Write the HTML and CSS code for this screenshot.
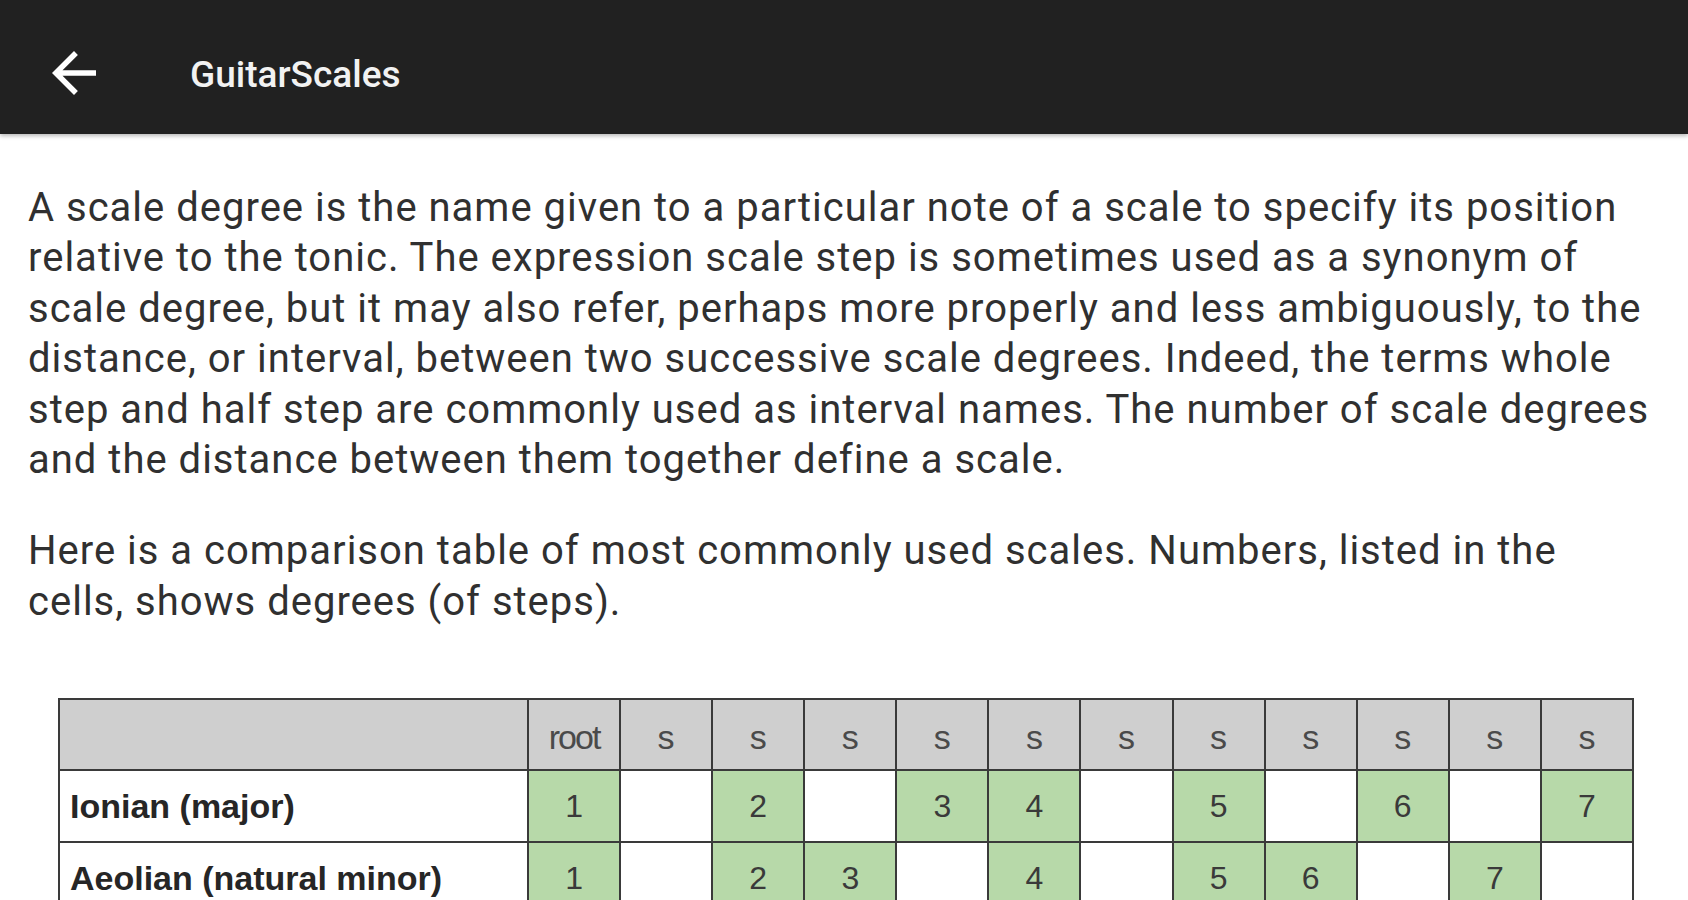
FILE: index.html
```html
<!DOCTYPE html>
<html>
<head>
<meta charset="utf-8">
<title>GuitarScales</title>
<link rel="stylesheet" href="styles.css">
</head>
<body>
<header class="appbar">
  <svg class="back" viewBox="0 0 24 24" width="66" height="66" aria-hidden="true">
    <path d="M20 11H7.83l5.59-5.59L12 4l-8 8 8 8 1.41-1.41L7.83 13H20v-2z" fill="#ffffff"/>
  </svg>
  <span class="title">GuitarScales</span>
</header>
<main class="content">
  <p class="para">A scale degree is the name given to a particular note of a scale to specify its position relative to the tonic. The expression scale step is sometimes used as a synonym of scale degree, but it may also refer, perhaps more properly and less ambiguously, to the distance, or interval, between two successive scale degrees. Indeed, the terms whole step and half step are commonly used as interval names. The number of scale degrees and the distance between them together define a scale.</p>
  <p class="para">Here is a comparison table of most commonly used scales. Numbers, listed in the cells, shows degrees (of steps).</p>
  <table class="scales">
    <colgroup>
      <col class="c-name">
      <col class="c-step"><col class="c-step"><col class="c-step"><col class="c-step">
      <col class="c-step"><col class="c-step"><col class="c-step"><col class="c-step">
      <col class="c-step"><col class="c-step"><col class="c-step"><col class="c-step">
    </colgroup>
    <thead>
      <tr>
        <th class="hname"></th>
        <th class="root">root</th>
        <th>s</th><th>s</th><th>s</th><th>s</th><th>s</th>
        <th>s</th><th>s</th><th>s</th><th>s</th><th>s</th><th>s</th>
      </tr>
    </thead>
    <tbody>
      <tr>
        <td class="name">Ionian (major)</td>
        <td class="on">1</td><td></td><td class="on">2</td><td></td><td class="on">3</td><td class="on">4</td>
        <td></td><td class="on">5</td><td></td><td class="on">6</td><td></td><td class="on">7</td>
      </tr>
      <tr>
        <td class="name">Aeolian (natural minor)</td>
        <td class="on">1</td><td></td><td class="on">2</td><td class="on">3</td><td></td><td class="on">4</td>
        <td></td><td class="on">5</td><td class="on">6</td><td></td><td class="on">7</td><td></td>
      </tr>
    </tbody>
  </table>
</main>
</body>
</html>
```

FILE: styles.css
```css
html, body {
  margin: 0;
  padding: 0;
  background: #ffffff;
}
body {
  width: 1688px;
  height: 900px;
  overflow: hidden;
  font-family: Roboto, "Noto Sans", sans-serif;
}
.appbar {
  position: relative;
  z-index: 2;
  height: 134px;
  background: #212121;
  display: flex;
  align-items: center;
  padding-left: 41px;
  box-shadow: 0 2px 4px rgba(0, 0, 0, 0.28);
}
.back {
  display: block;
  margin-top: 12px;
}
.title {
  margin-left: 83px;
  color: #f2f2f2;
  font-family: Roboto, sans-serif;
  font-weight: 500;
  font-size: 37px;
  margin-top: 14px;
}
.content {
  padding: 49px 26px 0 28px;
}
.para {
  margin: 0 0 41px 0;
  font-size: 40px;
  letter-spacing: 1px;
  line-height: 50.4px;
  color: #303030;
}
.scales {
  margin: 71px 0 0 30px;
  width: 1576px;
  table-layout: fixed;
  border-collapse: collapse;
  font-family: "Liberation Sans", Arial, sans-serif;
}
.c-name { width: 469px; }
.scales th, .scales td {
  border: 2px solid #3a3a3a;
  padding: 0;
  text-align: center;
  vertical-align: middle;
}
.scales thead tr { height: 71px; }
.scales tbody tr { height: 72px; }
.scales th {
  background: #cfcfcf;
  color: #4a4a4a;
  font-weight: normal;
  font-size: 34px;
  padding-top: 6px;
}
.scales th.root {
  letter-spacing: -2px;
}
.scales td {
  font-size: 32px;
  color: #3a3a3a;
  background: #ffffff;
}
.scales td.on {
  background: #b7d9a9;
}
.scales td.name {
  text-align: left;
  padding-left: 10px;
  font-weight: bold;
  font-size: 34px;
  color: #262626;
}
```
